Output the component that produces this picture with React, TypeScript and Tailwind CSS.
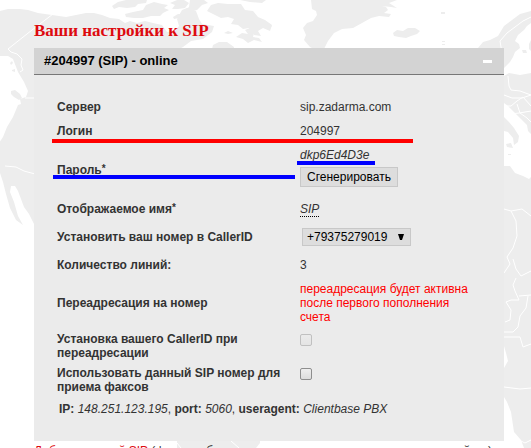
import type React from "react"
import { useState } from "react"

function MapBackground() {
  return (
    <svg
      className="absolute top-0 left-0 -z-10"
      width="531"
      height="448"
      viewBox="0 0 531 448"
      fill="#ededed"
      aria-hidden="true"
    >
      {/* North America */}
      <path d="M0 11l8-2 12 0 8 1 10 3 14 2 14 2 10-2 10-2 8 0 8 2 8 3 9 1 6 4 5-2 7 2 8-2 8 2 9 2 5 7 8-1 4-5-2-7 5-9 5-2 9 3 3 8 3 5 12 2-2 6-9 7-12 2-8 6-11 6-4 4-8 4-4 3v10H40v158l-6-8-5-10-5-7-6-16-3-5-4 0-1 6 4 10 4 14 5 9-7-5-6-12-4-14-3-12-4-12v-27l4-6 4-10 6-10 5-12 3-1-1-5 6-2 2-6-4-9-6-10-5-13-5-3H0z" />
      <path d="M11 91l4-1 5 4 2 4-3 2-5-3-3-3zM10 63l2-2 1 2-2 2zM15 61l3-2 0 3-3 2zM12 70l3-1 0 3-3-1z" />
      {/* Arctic islands */}
      <path d="M112 6l6-4 8-2h21l-1 3-8 1-3 3-8 1-8-1-5 2z" />
      <path d="M125 14l8-2 10-2 3-5 8-3 8 2 6 1-4 3 5 2-6 3-3 3-9 0-8 2-9 0-8-1z" />
      <path d="M170 3l7-3h7l5 3-4 5-7 1-6 0 3-4zM190 0h14l4 3-6 2-5 5-7 2-6-1 5-4zM173 17l5-3 4 0-3 4-5 1z" />
      <path d="M207 11l4-6 7-2 10 1 13 0 4 6 8 1 5 6 7 3 7 5-2 6-7-3-5 3 3 5-7-1-5-7-6 1-5-4-7-1 3-5-6-2-7 1-6-3z" />
      <path d="M240 0h26l-4 3-12-1zM224 33l4-2 5 2-5 1zM236 37l6-4 6 1-3-4 5-2 4 5-1 4 6 1 3 4-8-2-6 3-5-4zM213 45l6-3 8 0 7 5v2h-22z" />
      {/* Greenland and Iceland */}
      <path d="M311 0l1 9 4 2 1 4-4 6-6 2-4 5 3 7-2 5 6 7 4 2h10l4-8 6-8 8-4 11-1 9-5 9-5 8-2 10 1 2-3-7-1 4-3-2-3-4-1 9 1 6 1-8-5 8-3z" />
      <path d="M393 33l4-3 6 1 5-3 7 0 5 3-3 3-6 2-5 2-7-1-5-1zM441 12h4v2h-4zM442 41h3v1h-3zM442 44h3v1h-3zM270 24l2 2-2 2z" />
      {/* Europe */}
      <path d="M478 48l5-6 7-2 8-4 6-10 8-6 8-6 11-3v12l-4 3-3 4-6 5-3 6 4 3 1 4-5 4-2 5-3 5-6 6-5 2V48z" />
      <path d="M522 50l4 0 1 3-4 0zM531 40l-2 4 0 5 2 2zM504 76l5-3 11 2 11-2v61l-3-3-1-6-6-6-7-7-6-6-4-3z" />
      <path d="M504 117l5 5 5 6 5 8-1 6-4 3-1-7-5-6-4-1zM506 144l5-1 2 5-6-1zM508 154h3v1h-3z" />
      {/* Africa */}
      <path d="M504 166l6 0 5 7 8 3 6 3 2-2v271h-7l-3-8-7-8-3-20-4-10-3-5v-29l4-7-2-8-2-7z" />
      {/* South America */}
      <path d="M177 436h83v7l-4 5h-79z" />
      <g fill="none" stroke="#ffffff" strokeWidth="1">
        <path d="M53 14L32 30 8 49l3 3 6 2 5 5-1 6 2 5-3 2M25 98h10M5 166l11 1 8 4 11 3" />
        <path d="M531 17l-8 4-8 6-8 6-7 8 2 12M508 76l1 10 2 4 9 1 11 4M504 95l8 3 10 0 9-3M505 106l6 0 6-5 6-4 8 9M504 110l6 4 9-1 12-2M517 104l3 9 7 5 4 4" />
        <path d="M504 209l7 2 11-2 9 7M511 211l5 10 1 15-4 12-6 9 3 7-6 9M513 259l3 10 5 7 10-5M516 278l-3 7 2 6 4 9-8 0-5 2 5 8-1 10-5 2M519 296l12-1M528 296l-2 12-6 8-2 11-5 5-9 0M504 337l16 0 3 10 8-3M504 387l16 2 11-1M521 441l4 2 6-3M231 441l8 7M177 443l4 5" />
      </g>
    </svg>
  )
}

interface SettingRowProps {
  label: React.ReactNode
  height: string
  top?: boolean
  mark?: React.ReactNode
  children: React.ReactNode
}

function SettingRow({ label, height, top, mark, children }: SettingRowProps) {
  return (
    <tr className={height}>
      <th scope="row" className="relative w-[243px] p-0 pr-3 text-left align-middle font-bold">
        {label}
        {mark}
      </th>
      <td className={`relative p-0 ${top ? "pt-[5px] align-top" : "align-middle"}`}>{children}</td>
    </tr>
  )
}

function Asterisk() {
  return <span className="align-[2px] text-[10px] leading-none">*</span>
}

const checkboxClass =
  "block h-3 w-3 appearance-none rounded-xs border border-[#8e8e8e] bg-linear-to-b from-[#eeeeee] to-[#dcdcdc] checked:bg-[#777777] disabled:border-[#c0c0c0] disabled:from-[#ebebeb] disabled:to-[#e4e4e4]"

export default function App() {
  const [open, setOpen] = useState(true)
  const [fax, setFax] = useState(false)

  return (
    <div className="relative isolate min-h-screen overflow-hidden bg-white pr-[27px] pl-[34px] font-['Liberation_Sans',sans-serif] text-[12px] leading-[14px] text-[#333333]">
      <MapBackground />

      <h1 className="pt-[21px] pb-[7px] font-['Liberation_Serif',serif] text-[17px] leading-5 font-bold text-[#dd0a0f]">
        Ваши настройки к SIP
      </h1>

      <section className="bg-[#ebebeb]">
        <header className="flex h-[27px] items-center justify-between border-b border-[#777777] bg-[#d3d3d3] pr-3 pl-[10px]">
          <h2 className="text-[13px] font-bold text-black">#204997 (SIP) - online</h2>
          <button
            type="button"
            aria-label="Свернуть"
            aria-expanded={open}
            onClick={() => setOpen(!open)}
            className="flex h-4 items-center"
          >
            <span className="h-[3px] w-[9px] bg-white" />
          </button>
        </header>

        {open && (
          <div className="pt-5 pr-6 pb-5 pl-[23px]">
            <table className="w-full border-collapse">
              <tbody>
                <SettingRow label="Сервер" height="h-6">
                  sip.zadarma.com
                </SettingRow>
                <SettingRow
                  label="Логин"
                  height="h-6"
                  mark={<span className="absolute top-5 -left-[5px] z-10 h-1 w-[361px] bg-[#ff0000]" />}
                >
                  204997
                </SettingRow>
                <SettingRow
                  label={
                    <>
                      Пароль
                      <Asterisk />
                    </>
                  }
                  height="h-[54px]"
                  top
                  mark={<span className="absolute top-8 -left-1 h-1 w-[242px] bg-[#0000ff]" />}
                >
                  <em className="block">dkp6Ed4D3e</em>
                  <span className="absolute top-[18px] -left-[3px] h-1 w-[78px] bg-[#0000ff]" />
                  <button
                    type="button"
                    className="mt-[5px] block h-5 border border-[#c8c8c8] bg-[#dddddd] px-[6px] text-black"
                  >
                    Сгенерировать
                  </button>
                </SettingRow>
                <SettingRow
                  label={
                    <>
                      Отображаемое имя
                      <Asterisk />
                    </>
                  }
                  height="h-6"
                >
                  <button type="button" className="block border-b border-dotted border-black italic">
                    SIP
                  </button>
                </SettingRow>
                <SettingRow label={<label htmlFor="caller">Установить ваш номер в CallerID</label>} height="h-8">
                  <div className="relative ml-[2px] w-[109px]">
                    <select
                      id="caller"
                      className="block h-[18px] w-full appearance-none border border-[#c8c8c8] bg-[#dddddd] pl-1 text-black"
                    >
                      <option>+79375279019</option>
                    </select>
                    <svg
                      className="pointer-events-none absolute top-[6px] right-[7px]"
                      width="6"
                      height="6"
                      viewBox="0 0 6 6"
                      aria-hidden="true"
                    >
                      <path d="M0 0h6L4 6H2z" />
                    </svg>
                  </div>
                </SettingRow>
                <SettingRow label="Количество линий:" height="h-6">
                  3
                </SettingRow>
                <SettingRow label="Переадресация на номер" height="h-[52px]">
                  <p className="max-w-[180px] text-[#ff0000]">переадресация будет активна после первого пополнения счета</p>
                </SettingRow>
                <SettingRow
                  label={<label htmlFor="forward">Установка вашего CallerID при переадресации</label>}
                  height="h-[34px]"
                  top
                >
                  <input id="forward" type="checkbox" disabled className={checkboxClass} />
                </SettingRow>
                <SettingRow
                  label={<label htmlFor="fax">Использовать данный SIP номер для приема факсов</label>}
                  height="h-[34px]"
                  top
                >
                  <input
                    id="fax"
                    type="checkbox"
                    checked={fax}
                    onChange={(e) => setFax(e.target.checked)}
                    className={checkboxClass}
                  />
                </SettingRow>
              </tbody>
            </table>
            <p className="px-[2px] py-[5px]">
              <b>IP:</b> <i>148.251.123.195</i>, <b>port:</b> <i>5060</i>, <b>useragent:</b> <i>Clientbase PBX</i>
            </p>
          </div>
        )}
      </section>

      <p className="mt-[3px] h-[14px] whitespace-nowrap">
        <a href="#add" className="text-[#dd0a0f]">
          Добавить новый SIP
        </a>{" "}
        (функция будет полезна при подключении разных устройств)
      </p>
    </div>
  )
}
